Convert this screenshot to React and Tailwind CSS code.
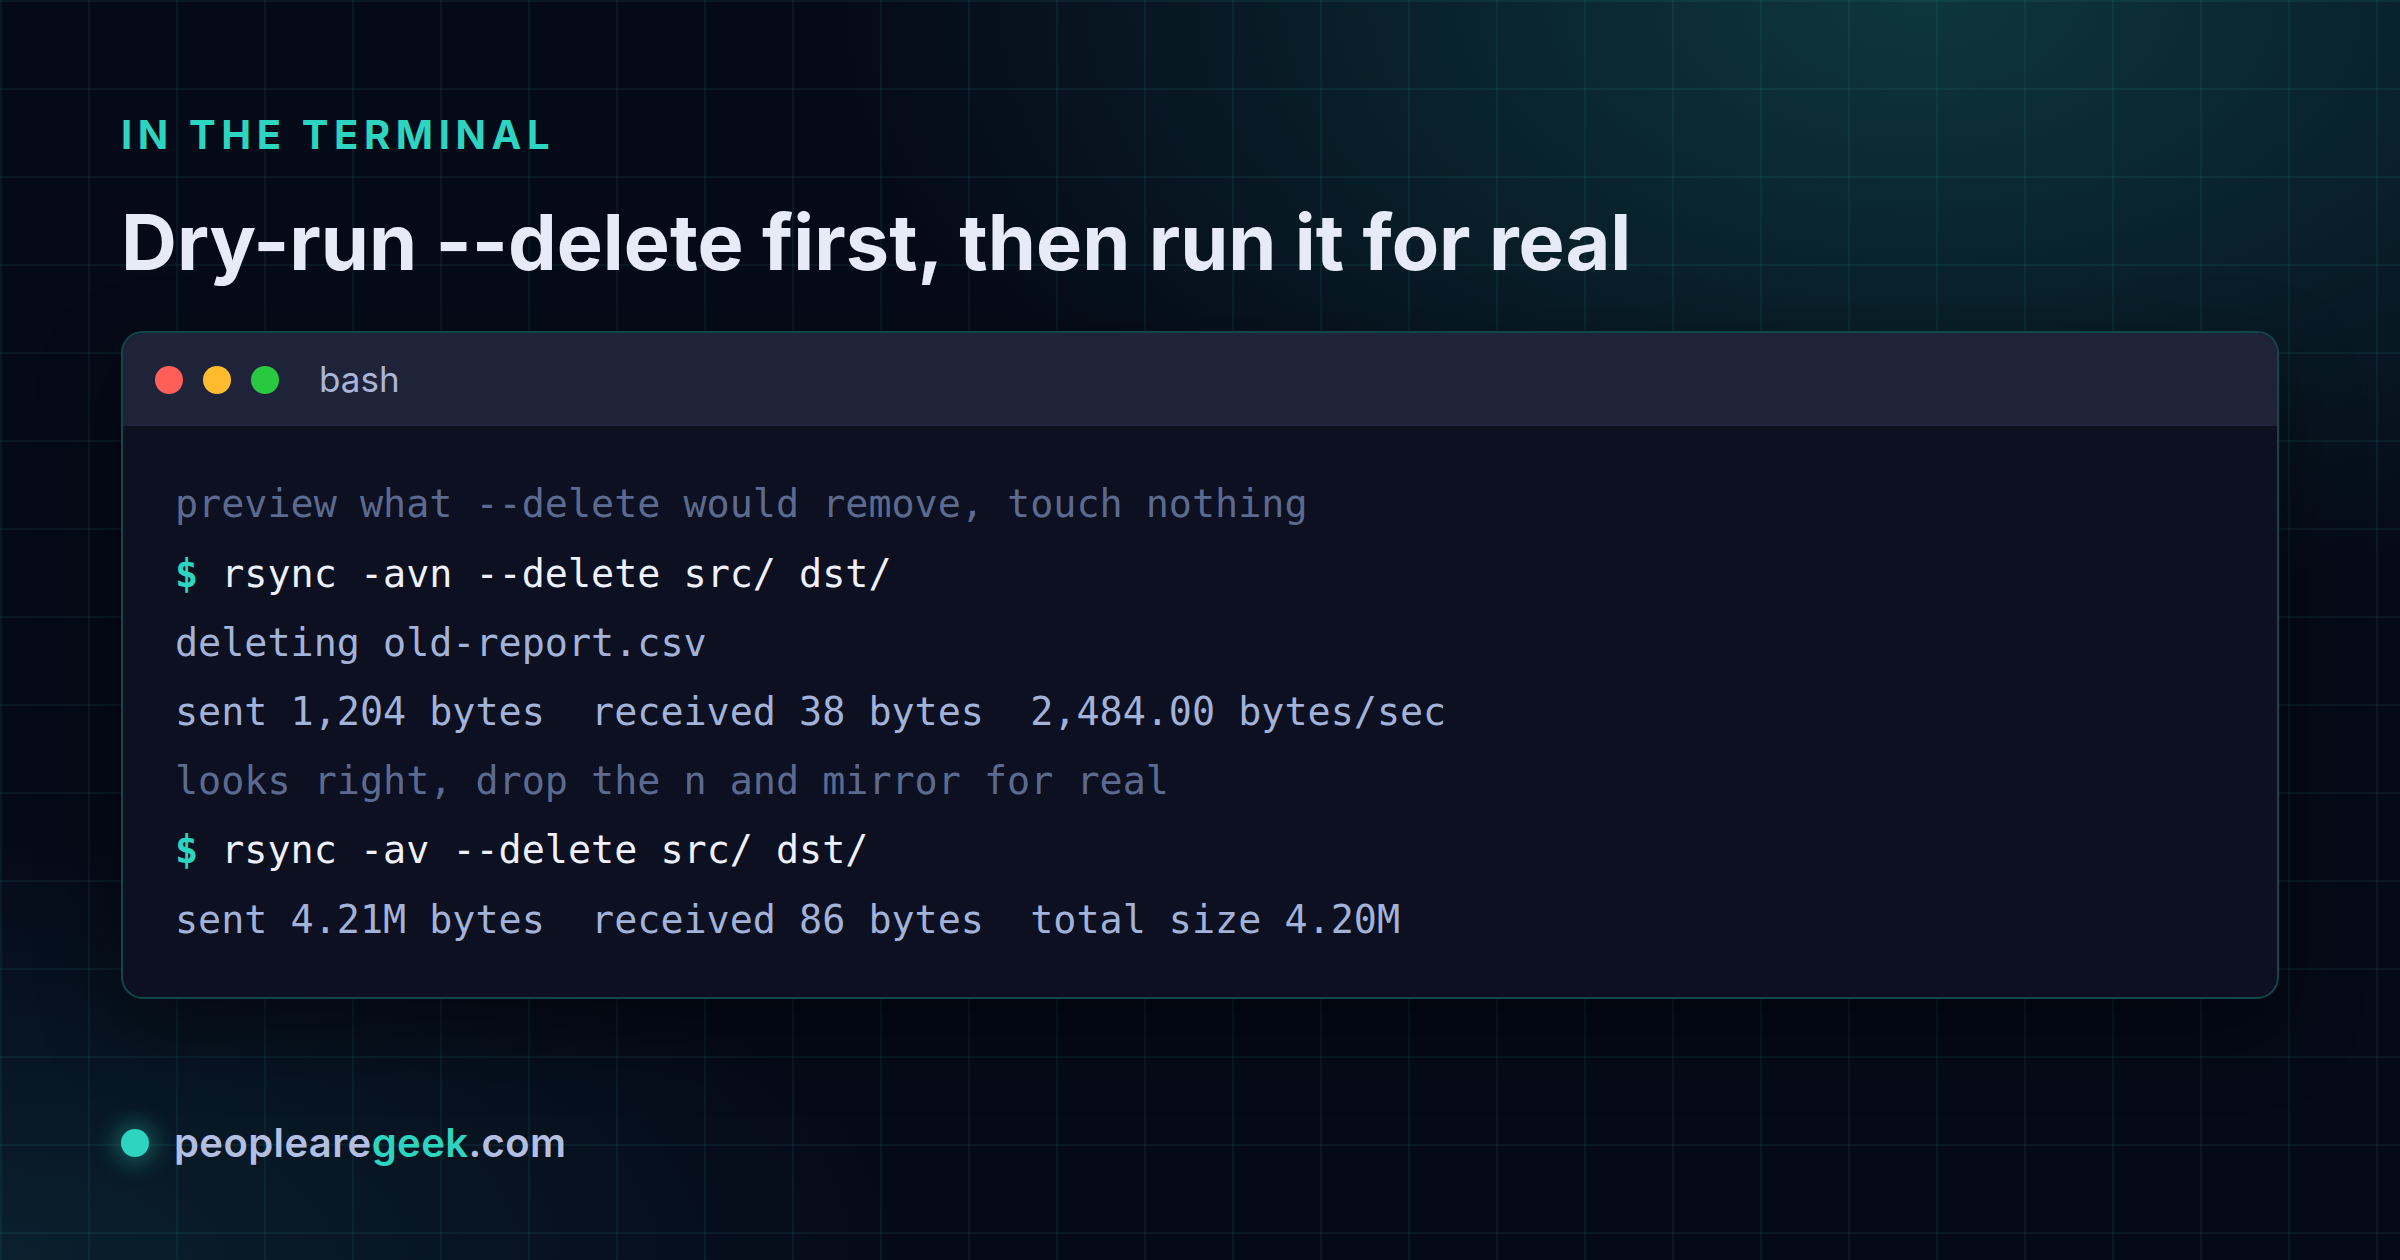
const lines = [
  { kind: 'comment', text: 'preview what --delete would remove, touch nothing' },
  { kind: 'cmd', text: 'rsync -avn --delete src/ dst/' },
  { kind: 'out', text: 'deleting old-report.csv' },
  { kind: 'out', text: 'sent 1,204 bytes  received 38 bytes  2,484.00 bytes/sec' },
  { kind: 'comment', text: 'looks right, drop the n and mirror for real' },
  { kind: 'cmd', text: 'rsync -av --delete src/ dst/' },
  { kind: 'out', text: 'sent 4.21M bytes  received 86 bytes  total size 4.20M' },
]

function CodeLine({ kind, text }) {
  if (kind === 'cmd') {
    return (
      <div className="whitespace-pre text-[#eef1fb]">
        <span className="font-bold text-[#2dd4bf]">$</span> {text}
      </div>
    )
  }
  return (
    <div className={kind === 'comment' ? 'whitespace-pre text-[#5d6a90]' : 'whitespace-pre text-[#a3b2d8]'}>
      {text}
    </div>
  )
}

export default function App() {
  return (
    <div className="w-[2400px] h-[1260px] overflow-hidden bg-[#050a18] bg-[image:radial-gradient(ellipse_1500px_850px_at_80%_0%,rgba(16,74,74,0.7),transparent_72%),radial-gradient(ellipse_1200px_560px_at_0%_100%,rgba(14,54,66,0.5),transparent_75%)]">
      {/* grid layer */}
      <div className="w-full h-full bg-[image:linear-gradient(to_right,rgba(60,200,190,0.075)_2px,transparent_2px),linear-gradient(to_bottom,rgba(60,200,190,0.075)_2px,transparent_2px)] bg-[size:88px_88px] px-[121px] pt-[115px] flex flex-col font-['Inter','Noto_Sans',sans-serif]">

        {/* Eyebrow */}
        <p className="text-[40px] leading-none font-bold tracking-[0.14em] text-[#2dd4bf]">IN THE TERMINAL</p>

        {/* Title */}
        <h1 className="mt-[49px] text-[77.4px] leading-none font-bold text-[#e7ebf8]">
          Dry-run --delete first, then run it for real
        </h1>

        {/* Terminal window */}
        <div className="mt-[50px] rounded-[22px] border-2 border-[#12474a] bg-[#0c1020] overflow-hidden shadow-[0_30px_80px_rgba(0,0,0,0.45)]">
          <div className="h-[93px] bg-[#1f2339] flex items-center pl-[32px]">
            <div className="flex gap-5">
              <span className="w-7 h-7 rounded-full bg-[#ff5f57]" />
              <span className="w-7 h-7 rounded-full bg-[#febc2e]" />
              <span className="w-7 h-7 rounded-full bg-[#28c840]" />
            </div>
            <span className="ml-[40px] text-[35px] leading-none text-[#aab4d6]">bash</span>
          </div>
          <div className="pt-[43px] pb-[43px] pl-[52px] text-[38.4px] leading-[69.2px] font-['DejaVu_Sans_Mono',monospace]">
            {lines.map((l, i) => (
              <CodeLine key={i} kind={l.kind} text={l.text} />
            ))}
          </div>
        </div>

        {/* Footer */}
        <div className="mt-[124px] flex items-center gap-[25px]">
          <span className="w-7 h-7 rounded-full bg-[#2dd4bf] shadow-[0_0_22px_6px_rgba(45,212,191,0.35)]" />
          <span className="text-[40px] leading-none font-semibold tracking-[0.01em] text-[#b3bee0]">
            peopleare<span className="text-[#2dd4bf]">geek</span>.com
          </span>
        </div>
      </div>
    </div>
  )
}
